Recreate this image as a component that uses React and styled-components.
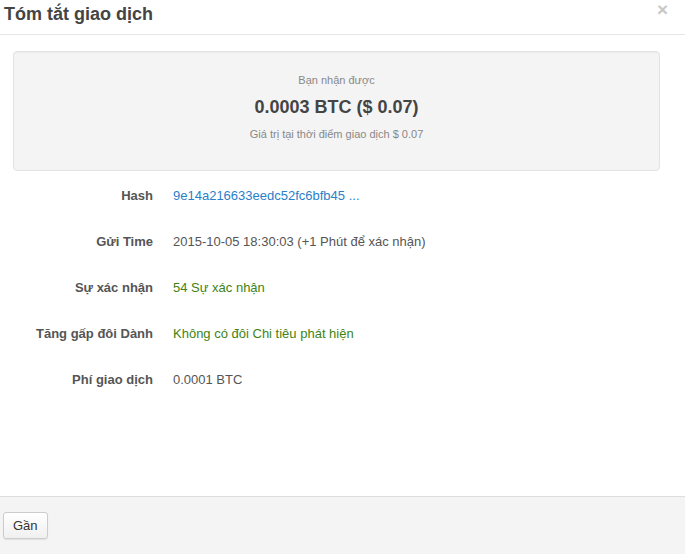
import React from 'react';
import styled, { createGlobalStyle } from 'styled-components';

const GlobalStyle = createGlobalStyle`
  html, body {
    margin: 0;
    padding: 0;
    background: #fff;
    font-family: "Liberation Sans", Arial, sans-serif;
  }
`;

const rows = [
  { label: 'Hash', value: '9e14a216633eedc52fc6bfb45 ...', tone: 'link' },
  { label: 'Gửi Time', value: '2015-10-05 18:30:03 (+1 Phút để xác nhận)' },
  { label: 'Sự xác nhận', value: '54 Sự xác nhận', tone: 'good' },
  { label: 'Tăng gấp đôi Dành', value: 'Không có đôi Chi tiêu phát hiện', tone: 'good' },
  { label: 'Phí giao dịch', value: '0.0001 BTC' },
];

const App = () => (
  <Modal>
    <GlobalStyle />
    <Header>
      <Title>Tóm tắt giao dịch</Title>
      <Close>×</Close>
    </Header>

    <Body>
      <Summary>
        <Caption>Bạn nhận được</Caption>
        <Amount>0.0003 BTC ($ 0.07)</Amount>
        <Caption>Giá trị tại thời điểm giao dịch $ 0.07</Caption>
      </Summary>

      <Details>
        {rows.map((r) => (
          <Row key={r.label}>
            <Label>{r.label}</Label>
            <Value $tone={r.tone}>{r.value}</Value>
          </Row>
        ))}
      </Details>
    </Body>

    <Footer>
      <Button>Gần</Button>
    </Footer>
  </Modal>
);

export default App;

const Modal = styled.div`
  display: flex;
  flex-direction: column;
  height: 554px;
  width: 685px;
  color: #555;
`;

const Header = styled.div`
  display: flex;
  align-items: center;
  justify-content: space-between;
  height: 35px;
  padding: 0 17px 0 4px;
  border-bottom: 1px solid #e5e5e5;
  box-sizing: border-box;
`;

const Title = styled.h3`
  margin: 0;
  margin-top: -6px;
  font-size: 18px;
  font-weight: bold;
  color: #444;
`;

const Close = styled.span`
  margin-top: -14px;
  font-size: 19px;
  font-weight: bold;
  color: #c8c8c8;
`;

const Body = styled.div`
  flex: 1;
  padding: 16px 25px 0 13px;
`;

const Summary = styled.div`
  display: flex;
  flex-direction: column;
  align-items: center;
  height: 120px;
  padding-top: 21px;
  box-sizing: border-box;
  background: #f4f4f4;
  border: 1px solid #e3e3e3;
  border-radius: 4px;
  box-shadow: inset 0 1px 1px rgba(0, 0, 0, 0.04);
`;

const Caption = styled.div`
  font-size: 11px;
  color: #888;
  line-height: 14px;
`;

const Amount = styled.div`
  margin: 9px 0 9px;
  font-size: 18px;
  font-weight: bold;
  color: #444;
  line-height: 22px;
`;

const Details = styled.div`
  display: flex;
  flex-direction: column;
  padding-top: 16px;
`;

const Row = styled.div`
  display: grid;
  grid-template-columns: 140px 1fr;
  column-gap: 20px;
  height: 46px;
  font-size: 13px;
  line-height: 18px;
`;

const Label = styled.div`
  text-align: right;
  font-weight: bold;
  color: #555;
`;

const Value = styled.div`
  color: ${({ $tone }) =>
    $tone === 'link' ? '#2a7fc9' : $tone === 'good' ? '#3f8314' : '#555'};
`;

const Footer = styled.div`
  height: 58px;
  padding: 15px 3px;
  box-sizing: border-box;
  background: #f4f4f4;
  border-top: 1px solid #ddd;
`;

const Button = styled.button`
  height: 27px;
  padding: 0 9px;
  font-family: "Liberation Sans", Arial, sans-serif;
  font-size: 13px;
  color: #333;
  background: linear-gradient(#fff, #f0f0f0);
  border: 1px solid #ccc;
  border-radius: 3px;
  box-shadow: 0 1px 1px rgba(0, 0, 0, 0.08);
`;
